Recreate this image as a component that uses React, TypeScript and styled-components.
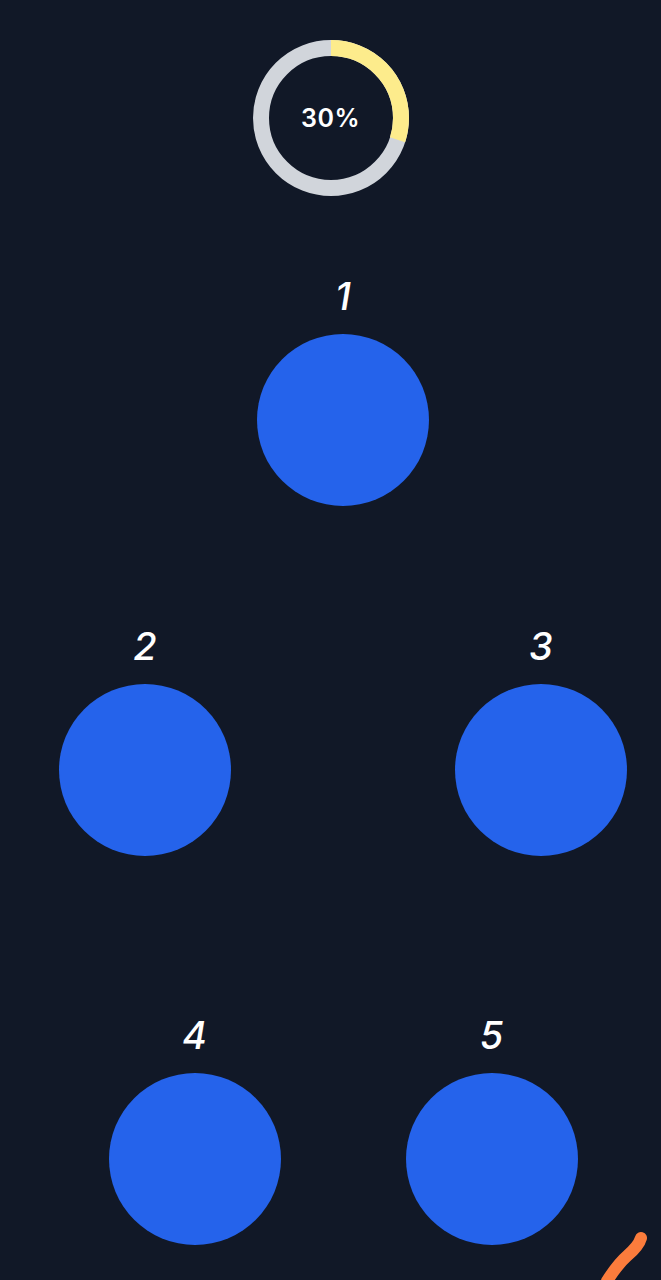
import { FC } from "react";
import styled, { createGlobalStyle } from "styled-components";

const GlobalStyle = createGlobalStyle`
  html, body {
    margin: 0;
    padding: 0;
    background: #111827;
  }
  * {
    box-sizing: border-box;
  }
`;

const RING_SIZE = 156;
const RING_STROKE = 16;
const RING_RADIUS = (RING_SIZE - RING_STROKE) / 2;
const CIRCUMFERENCE = 2 * Math.PI * RING_RADIUS;

interface ProgressRingProps {
  percent: number;
}

const ProgressRing: FC<ProgressRingProps> = ({ percent }) => {
  const offset = CIRCUMFERENCE * (1 - percent / 100);
  return (
    <RingWrap>
      <svg width={RING_SIZE} height={RING_SIZE} viewBox={`0 0 ${RING_SIZE} ${RING_SIZE}`}>
        <circle
          cx={RING_SIZE / 2}
          cy={RING_SIZE / 2}
          r={RING_RADIUS}
          fill="none"
          stroke="#d1d5db"
          strokeWidth={RING_STROKE}
        />
        <circle
          cx={RING_SIZE / 2}
          cy={RING_SIZE / 2}
          r={RING_RADIUS}
          fill="none"
          stroke="#fdec8c"
          strokeWidth={RING_STROKE}
          strokeDasharray={CIRCUMFERENCE}
          strokeDashoffset={offset}
          transform={`rotate(-90 ${RING_SIZE / 2} ${RING_SIZE / 2})`}
        />
      </svg>
      <RingLabel>{percent}%</RingLabel>
    </RingWrap>
  );
};

interface NodeProps {
  label: string;
}

const TreeNode: FC<NodeProps> = ({ label }) => (
  <NodeBox>
    <NodeLabel>{label}</NodeLabel>
    <Bubble />
  </NodeBox>
);

const App: FC = () => {
  return (
    <>
      <GlobalStyle />
      <Page>
        <ProgressRing percent={30} />
        <Tree>
          <Row $gap={0} $space={80}>
            <TreeNode label="1" />
          </Row>
          <Row $gap={224} $space={120}>
            <TreeNode label="2" />
            <TreeNode label="3" />
          </Row>
          <Row $gap={125} $space={159}>
            <TreeNode label="4" />
            <TreeNode label="5" />
          </Row>
        </Tree>
        <Edge width="60" height="50" viewBox="0 0 60 50">
          <path
            d="M47 8 C 45 15, 40 20, 33 26 S 20 40, 13 51"
            fill="none"
            stroke="#fb7c3c"
            strokeWidth="12"
            strokeLinecap="round"
          />
        </Edge>
      </Page>
    </>
  );
};

export default App;

const Page = styled.div`
  position: relative;
  width: 100%;
  min-height: 1280px;
  overflow: hidden;
  display: flex;
  flex-direction: column;
  align-items: center;
  padding-top: 40px;
  font-family: Inter, "Noto Sans", sans-serif;
  color: #ffffff;
`;

const RingWrap = styled.div`
  position: relative;
  width: ${RING_SIZE}px;
  height: ${RING_SIZE}px;
  svg {
    display: block;
  }
`;

const RingLabel = styled.span`
  position: absolute;
  inset: 0;
  display: flex;
  align-items: center;
  justify-content: center;
  font-size: 25px;
  font-weight: 600;
  letter-spacing: 0.5px;
  color: #ffffff;
`;

const Tree = styled.div`
  width: 100%;
  padding-left: 25px;
  display: flex;
  flex-direction: column;
`;

const Row = styled.div<{ $gap: number; $space: number }>`
  display: flex;
  justify-content: center;
  gap: ${(p) => p.$gap}px;
  margin-top: ${(p) => p.$space}px;
`;

const NodeBox = styled.div`
  display: flex;
  flex-direction: column;
  align-items: center;
  gap: 18px;
`;

const NodeLabel = styled.span`
  height: 40px;
  line-height: 40px;
  font-size: 38px;
  font-weight: 500;
  font-style: italic;
  color: #ffffff;
`;

const Bubble = styled.div`
  width: 172px;
  height: 172px;
  border-radius: 50%;
  background: #2563eb;
`;

const Edge = styled.svg`
  position: absolute;
  right: 7px;
  bottom: 0;
`;
